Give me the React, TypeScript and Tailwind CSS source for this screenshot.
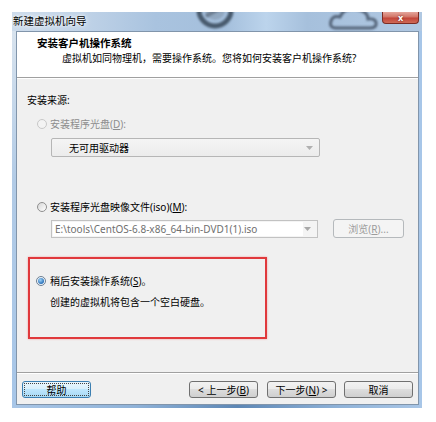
import React from "react";

const FONT = "font-['Noto_Sans','Noto_Sans_CJK_SC',sans-serif]";

function Radio({ state }: { state: "disabled" | "off" | "on" }) {
  if (state === "disabled") {
    return (
      <span className="w-[10px] h-[10px] rounded-full border border-[#c8c8c8] bg-[#f3f3f3] shrink-0" />
    );
  }
  if (state === "off") {
    return (
      <span className="w-[10px] h-[10px] rounded-full border border-[#8f8f8f] bg-[linear-gradient(135deg,#d6d6d6,#ffffff)] shrink-0" />
    );
  }
  return (
    <span className="w-[10px] h-[10px] rounded-full border border-[#6d7f92] bg-[#eef3f8] shrink-0 flex items-center justify-center">
      <span className="w-[6px] h-[6px] rounded-full bg-[radial-gradient(circle_at_40%_35%,#9fd4f7,#2a70b9_70%)]" />
    </span>
  );
}

function Arrow({ color = "#9a9a9a" }: { color?: string }) {
  return (
    <svg width="7" height="4" viewBox="0 0 7 4">
      <path d="M0 0 L7 0 L3.5 4 Z" fill={color} />
    </svg>
  );
}

function WinButton({ children, focused = false }: { children: React.ReactNode; focused?: boolean }) {
  if (focused) {
    return (
      <div className="w-[69px] h-[17px] rounded-[3px] border border-[#3c7fb1] bg-[linear-gradient(#eaf6fd_0%,#d9f0fc_45%,#bee6fd_50%,#a7d9f5_100%)] p-[1px]">
        <div className="w-full h-full border border-dotted border-[#444] flex items-center justify-center text-[10px] leading-none text-black">
          {children}
        </div>
      </div>
    );
  }
  return (
    <div className="w-[69px] h-[17px] rounded-[3px] border border-[#707070] bg-[linear-gradient(#f2f2f2_0%,#ebebeb_45%,#dddddd_50%,#cfcfcf_100%)] flex items-center justify-center text-[10px] leading-none text-black">
      {children}
    </div>
  );
}

export default function App() {
  return (
    <div className={`w-[436px] h-[422px] bg-white overflow-hidden ${FONT}`}>
      <div className="ml-[12px] mt-[12px] w-[410px] h-[396px] flex flex-col bg-[#aac7e7]">
        {/* Title bar */}
        <div className="relative h-[19px] bg-[linear-gradient(90deg,#ccdbeb_0%,#bfd2e7_18%,#a9c3df_35%,#a4bfdc_52%,#bcd4ec_62%,#a6c0dc_72%,#b0c8e2_100%)] flex items-start justify-between overflow-hidden">
          <div className="relative z-10 pl-[1px] text-[10.5px] leading-[18px] text-black [text-shadow:0_0_6px_#ffffff,0_0_3px_#ffffff]">
            新建虚拟机向导
          </div>
          <svg className="absolute left-[178px] top-[-14px] blur-[1px]" width="52" height="36" viewBox="0 0 52 36">
            <circle cx="25" cy="12" r="16" fill="none" stroke="#485a6d" strokeWidth="5" />
            <path d="M16 18 L34 8" stroke="#5c6d80" strokeWidth="4" />
            <circle cx="25" cy="12" r="10" fill="#7d8fa3" opacity="0.5" />
          </svg>
          <svg className="absolute left-[314px] top-[-8px] blur-[1px]" width="56" height="30" viewBox="0 0 56 30">
            <path d="M10 24 Q3 24 5 17 Q7 11 14 13 Q18 3 30 5 Q42 7 42 15 Q51 14 50 21 Q49 24 44 24 Z" fill="none" stroke="#55657a" strokeWidth="3" />
          </svg>
          <div className="relative z-10 mr-[3px] w-[37px] h-[12px] rounded-b-[4px] border border-t-0 border-[#7c2c24] bg-[linear-gradient(#e4a69c_0%,#d27466_45%,#c2453a_55%,#cf6a56_100%)] flex items-center justify-center">
            <span className="text-white text-[9px] font-bold leading-none [text-shadow:0_0_2px_#5a1a14]">x</span>
          </div>
        </div>

        {/* Middle */}
        <div className="flex-1 flex">
          <div className="w-[4px] bg-[linear-gradient(#d8e3ee,#b2cbe6_40%,#a7c6e8)]" />
          <div className="w-[403px] border border-[#8195ab] flex flex-col bg-[#f0f0f0]">
            {/* Header */}
            <div className="h-[45px] bg-white flex flex-col pt-[4px]">
              <div className="pl-[20px] text-[10.5px] leading-[14px] font-bold text-black">安装客户机操作系统</div>
              <div className="pl-[45px] mt-[1px] text-[10px] leading-[14px] text-black">
                虚拟机如同物理机，需要操作系统。您将如何安装客户机操作系统?
              </div>
            </div>
            <div className="h-px bg-[#a0a0a0]" />
            <div className="h-px bg-white" />

            {/* Body */}
            <div className="flex-1 flex flex-col text-[10px] leading-[14px] text-black">
              <div className="pl-[10px] mt-[14px]">安装来源:</div>

              <div className="pl-[20px] mt-[10px] flex items-center gap-[3px] text-[#8d8d8d]">
                <Radio state="disabled" />
                <span>
                  安装程序光盘(<span className="underline">D</span>):
                </span>
              </div>

              <div className="ml-[34px] mt-[7px] w-[269px] h-[19px] rounded-[2px] border border-[#b6b6b6] bg-[linear-gradient(#f4f4f4,#ececec)] flex items-center justify-between pl-[17px] pr-[6px]">
                <span>无可用驱动器</span>
                <Arrow color="#b0b0b0" />
              </div>

              <div className="pl-[20px] mt-[43px] flex items-center gap-[3px]">
                <Radio state="off" />
                <span>
                  安装程序光盘映像文件(iso)(<span className="underline">M</span>):
                </span>
              </div>

              <div className="mt-[5px] flex items-center">
                <div className="ml-[34px] w-[267px] h-[18px] border border-[#c2c2c2] bg-[#f4f4f4] flex items-center justify-between pl-[1px] pr-[6px]">
                  <div className="h-[14px] w-[250px] bg-white pl-[2px] text-[#6f6f6f] text-[10px] leading-[14px]">
                    E:\tools\CentOS-6.8-x86_64-bin-DVD1(1).iso
                  </div>
                  <Arrow color="#a8a8a8" />
                </div>
                <div className="ml-[15px] w-[71px] h-[19px] rounded-[3px] border border-[#b5b9bc] bg-[#f4f4f4] flex items-center justify-center text-[#9c9c9c]">
                  浏览(<span className="underline">R</span>)...
                </div>
              </div>

              <div className="ml-[11px] mt-[19px] w-[239px] h-[82px] border-2 border-[#e0393c] shadow-[0_0_2px_#f0a0a0] flex flex-col">
                <div className="pl-[6px] mt-[15px] flex items-center gap-[4px]">
                  <Radio state="on" />
                  <span>
                    稍后安装操作系统(<span className="underline">S</span>)。
                  </span>
                </div>
                <div className="pl-[20px] mt-[7px]">创建的虚拟机将包含一个空白硬盘。</div>
              </div>

              <div className="flex-1" />
              <div className="h-px bg-[#a0a0a0]" />
              <div className="h-px bg-white" />
              <div className="h-[30px] flex items-start pt-[7px] px-[5px]">
                <WinButton focused>帮助</WinButton>
                <div className="flex-1" />
                <WinButton>
                  &lt; 上一步(<span className="underline">B</span>)
                </WinButton>
                <div className="w-[9px]" />
                <WinButton>
                  下一步(<span className="underline">N</span>) &gt;
                </WinButton>
                <div className="w-[8px]" />
                <WinButton>取消</WinButton>
              </div>
            </div>
          </div>
          <div className="w-[3px] bg-[#a7c6e8]" />
        </div>
        <div className="h-[3px] bg-[linear-gradient(90deg,#a9c6e6_0%,#8fb2d8_30%,#5d87b5_55%,#8fb2d8_80%,#a9c6e6_100%)]" />
      </div>
    </div>
  );
}
